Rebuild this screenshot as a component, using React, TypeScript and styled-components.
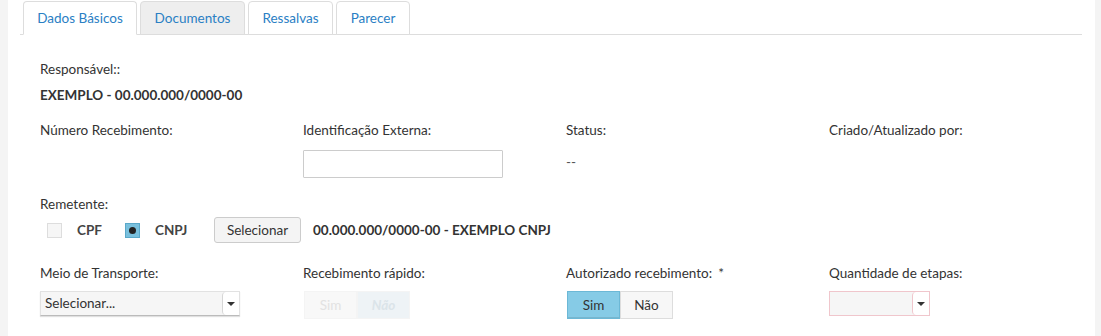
import React from "react";
import styled, { createGlobalStyle } from "styled-components";

const Global = createGlobalStyle`
  html, body { margin: 0; padding: 0; }
  body {
    background: #f4f4f4;
    font-family: Lato, "Open Sans", "Liberation Sans", sans-serif;
    font-size: 13.5px;
    color: #333;
  }
`;

const Panel = styled.div`
  margin: 0 6px 0 8px;
  background: #fff;
  min-height: 336px;
  box-sizing: border-box;
`;

const TabBar = styled.ul`
  list-style: none;
  margin: 0 13px 0 12px;
  padding: 1px 0 0 3px;
  display: flex;
  gap: 3px;
  border-bottom: 1px solid #ddd;
`;

const Tab = styled.li<{ $active?: boolean; $w: number; $muted?: boolean }>`
  width: ${(p) => p.$w}px;
  height: 34px;
  box-sizing: border-box;
  margin-bottom: -1px;
  border: 1px solid #ddd;
  border-bottom-color: ${(p) => (p.$active ? "#fff" : "#ddd")};
  border-radius: 4px 4px 0 0;
  background: ${(p) => (p.$active ? "#fff" : p.$muted ? "#eee" : "#fff")};
  color: #2a80c4;
  display: flex;
  align-items: center;
  justify-content: center;
`;

const Content = styled.div`
  padding: 24px 15px 0 20px;
`;

const Block = styled.div<{ $mt?: number }>`
  padding: 0 12px;
  margin-top: ${(p) => p.$mt ?? 0}px;
`;

const Label = styled.div<{ $mb?: number }>`
  line-height: 20px;
  margin-bottom: ${(p) => p.$mb ?? 0}px;
  white-space: nowrap;
`;

const Strong = styled.div`
  line-height: 20px;
  font-weight: 700;
`;

const Row = styled.div<{ $mt?: number }>`
  display: grid;
  grid-template-columns: repeat(4, 263px);
  margin-top: ${(p) => p.$mt ?? 0}px;
`;

const Col = styled.div`
  padding: 0 12px;
  box-sizing: border-box;
`;

const Required = styled.span`
  margin-left: 6px;
`;

const TextInput = styled.input`
  display: block;
  width: 200px;
  height: 28px;
  box-sizing: border-box;
  border: 1px solid #ccc;
  border-radius: 1px;
  background: #fff;
  margin: 0;
  padding: 0 6px;
  font: inherit;
`;

const Dash = styled.div`
  line-height: 20px;
  padding-top: 12px;
  color: #555;
`;

const ChoiceLine = styled.div`
  display: flex;
  align-items: center;
  height: 26px;
  margin-top: 3px;
  padding-left: 7px;
`;

const Box = styled.span<{ $on?: boolean }>`
  width: 15px;
  height: 15px;
  box-sizing: border-box;
  border: 1px solid ${(p) => (p.$on ? "#5aa8c9" : "#ddd")};
  background: ${(p) => (p.$on ? "#79c0dd" : "#f6f6f6")};
  display: inline-flex;
  align-items: center;
  justify-content: center;
  margin-top: 1px;
`;

const Dot = styled.span`
  width: 7px;
  height: 7px;
  border-radius: 50%;
  background: #222;
`;

const ChoiceText = styled.span<{ $w: number }>`
  font-weight: 700;
  margin-left: 15px;
  width: ${(p) => p.$w}px;
  color: #444;
`;

const Button = styled.button`
  height: 26px;
  width: 87px;
  box-sizing: border-box;
  border: 1px solid #ccc;
  border-radius: 3px;
  background: #f4f4f4;
  font: inherit;
  color: #333;
  padding: 0;
  margin-right: 12px;
`;

const Picked = styled.span`
  font-weight: 700;
  color: #333;
`;

const Select = styled.div<{ $w: number; $error?: boolean }>`
  width: ${(p) => p.$w}px;
  height: 25px;
  box-sizing: border-box;
  display: flex;
  align-items: stretch;
  background: #f6f6f6;
  border: 1px solid ${(p) => (p.$error ? "#f0c6cc" : "#e2e2e2")};
  border-bottom-color: ${(p) => (p.$error ? "#f0c6cc" : "#bbb")};
  box-shadow: ${(p) => (p.$error ? "none" : "0 1px 1px rgba(0,0,0,0.12)")};
  margin-top: 1px;
`;

const SelectText = styled.span`
  flex: 1;
  padding-left: 4px;
  line-height: 23px;
  color: #333;
`;

const Caret = styled.span<{ $error?: boolean }>`
  width: 16px;
  border-left: 1px solid ${(p) => (p.$error ? "#f0c6cc" : "#d6d6d6")};
  border-radius: 4px 0 0 4px;
  background: #fff;
  display: flex;
  align-items: center;
  justify-content: center;
  &::after {
    content: "";
    border-left: 4px solid transparent;
    border-right: 4px solid transparent;
    border-top: 4px solid #333;
  }
`;

const Toggle = styled.div`
  display: flex;
  height: 28px;
  padding-left: 1px;
`;

const ToggleBtn = styled.span<{ $on?: boolean }>`
  width: 53px;
  box-sizing: border-box;
  display: flex;
  align-items: center;
  justify-content: center;
  border: 1px solid ${(p) => (p.$on ? "#6cb8d6" : "#ddd")};
  background: ${(p) => (p.$on ? "#86cbe6" : "#f7f7f7")};
  color: #333;
  box-shadow: ${(p) => (p.$on ? "inset 0 -1px 0 rgba(0,0,0,0.1)" : "none")};
`;

const GhostToggle = styled.span<{ $on?: boolean }>`
  width: 53px;
  box-sizing: border-box;
  display: flex;
  align-items: center;
  justify-content: center;
  border: 1px solid #f4f4f4;
  background: ${(p) => (p.$on ? "#eef3f6" : "#f8f8f8")};
  color: ${(p) => (p.$on ? "#dbe4e9" : "#e2e2e2")};
  font-style: ${(p) => (p.$on ? "italic" : "normal")};
  font-weight: ${(p) => (p.$on ? 700 : 400)};
`;

export default function App() {
  return (
    <>
      <Global />
      <Panel>
        <TabBar>
          <Tab $active $w={114}>Dados Básicos</Tab>
          <Tab $muted $w={105}>Documentos</Tab>
          <Tab $w={85}>Ressalvas</Tab>
          <Tab $w={74}>Parecer</Tab>
        </TabBar>
        <Content>
          <Block>
            <Label $mb={6}>Responsável::</Label>
            <Strong>EXEMPLO - 00.000.000/0000-00</Strong>
          </Block>
          <Row $mt={15}>
            <Col>
              <Label>Número Recebimento:</Label>
            </Col>
            <Col>
              <Label $mb={10}>Identificação Externa:</Label>
              <TextInput />
            </Col>
            <Col>
              <Label>Status:</Label>
              <Dash>--</Dash>
            </Col>
            <Col>
              <Label>Criado/Atualizado por:</Label>
            </Col>
          </Row>
          <Block $mt={16}>
            <Label>Remetente:</Label>
            <ChoiceLine>
              <Box />
              <ChoiceText $w={48}>CPF</ChoiceText>
              <Box $on>
                <Dot />
              </Box>
              <ChoiceText $w={59}>CNPJ</ChoiceText>
              <Button>Selecionar</Button>
              <Picked>00.000.000/0000-00 - EXEMPLO CNPJ</Picked>
            </ChoiceLine>
          </Block>
          <Row $mt={20}>
            <Col>
              <Label $mb={8}>Meio de Transporte:</Label>
              <Select $w={200}>
                <SelectText>Selecionar...</SelectText>
                <Caret />
              </Select>
            </Col>
            <Col>
              <Label $mb={8}>Recebimento rápido:</Label>
              <Toggle>
                <GhostToggle>Sim</GhostToggle>
                <GhostToggle $on>Não</GhostToggle>
              </Toggle>
            </Col>
            <Col>
              <Label $mb={8}>
                Autorizado recebimento:<Required>*</Required>
              </Label>
              <Toggle>
                <ToggleBtn $on>Sim</ToggleBtn>
                <ToggleBtn>Não</ToggleBtn>
              </Toggle>
            </Col>
            <Col>
              <Label $mb={8}>Quantidade de etapas:</Label>
              <Select $w={101} $error>
                <SelectText />
                <Caret $error />
              </Select>
            </Col>
          </Row>
        </Content>
      </Panel>
    </>
  );
}
